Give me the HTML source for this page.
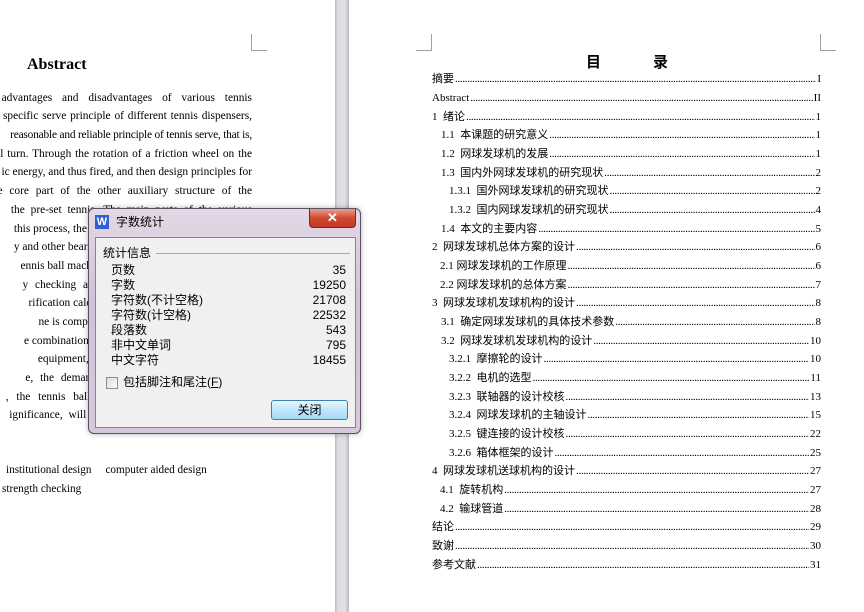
<!DOCTYPE html>
<html><head><meta charset="utf-8"><style>
*{margin:0;padding:0;box-sizing:border-box}
body{width:864px;height:612px;overflow:hidden;background:#fff;position:relative;font-family:"Liberation Serif","Noto Serif CJK SC","Noto Sans CJK SC",serif;color:#000}
.a{position:absolute}
.gut{left:335px;top:0;width:14px;height:612px;background:linear-gradient(90deg,#b8b8c0,#dedee2 20%,#e2e2e6 70%,#b8b8c0)}
.ln{position:absolute;left:0;width:252px;height:18px;overflow:hidden;font-size:11.4px;line-height:18px;white-space:nowrap;display:flex;justify-content:flex-end}
.ln span{flex:none}
.toc{position:absolute;left:0;font-size:11px;line-height:14px;white-space:nowrap;font-family:"Liberation Serif","Noto Sans CJK SC",serif}
.toc .r{position:absolute;height:14px;display:flex}
.toc .d{flex:1;overflow:hidden;margin:0 1px;letter-spacing:-0.3px}
.toc .d::before{content:"................................................................................................................................................................................................................................................................................................................"}
.dlg{left:88px;top:208px;width:273px;height:226px;border:1px solid #5a5060;border-radius:6px;background:linear-gradient(180deg,#e3d8e6,#d2c2d8 40%,#d8c8dc);box-shadow:0 0 6px rgba(0,0,0,.3)}
.pan{position:absolute;left:6px;top:28px;width:261px;height:191px;background:#f0f0f0;border:1px solid #8a8290}
.sf{font-family:"Liberation Sans","Noto Sans CJK SC",sans-serif;font-size:12px}
.row{position:absolute;left:15px;width:235px;height:15px;line-height:15px}
.row b{font-weight:normal;position:absolute;right:0}
</style></head><body>
<div class="a gut"></div>
<div class="a" style="left:251px;top:34px;width:1px;height:16px;background:#a0a0a0"></div>
<div class="a" style="left:251px;top:50px;width:16px;height:1px;background:#a0a0a0"></div>
<div class="a" style="left:431px;top:34px;width:1px;height:16px;background:#a0a0a0"></div>
<div class="a" style="left:416px;top:50px;width:16px;height:1px;background:#a0a0a0"></div>
<div class="a" style="left:820px;top:34px;width:1px;height:16px;background:#a0a0a0"></div>
<div class="a" style="left:820px;top:50px;width:16px;height:1px;background:#a0a0a0"></div>

<div class="a" style="left:27px;top:56px;font-size:16px;font-weight:bold">Abstract</div>
<div class="ln" style="top:89px"><span style="word-spacing:7px">he advantages and disadvantages of various tennis</span></div>
<div class="ln" style="top:107px"><span style="word-spacing:1px">specific serve principle of different tennis dispensers,</span></div>
<div class="ln" style="top:126px"><span style="letter-spacing:-0.2px">reasonable and reliable principle of tennis serve, that is,</span></div>
<div class="ln" style="top:145px"><span style="word-spacing:1px">l turn. Through the rotation of a friction wheel on the</span></div>
<div class="ln" style="top:163px"><span>ic energy, and thus fired, and then design principles for</span></div>
<div class="ln" style="top:182px"><span style="word-spacing:4px">the core part of the other auxiliary structure of the</span></div>
<div class="ln" style="top:201px"><span style="word-spacing:3px">the pre-set tennis. The main parts of the various</span></div>
<div class="ln" style="top:220px"><span>this process, the speed of the ball can be adjusted by</span></div>
<div class="ln" style="top:238px"><span>y and other bearing parts of the design and checking</span></div>
<div class="ln" style="top:257px"><span>ennis ball machine design of the frame structure of</span></div>
<div class="ln" style="top:276px"><span style="word-spacing:4px">y checking and calculation of the main parts</span></div>
<div class="ln" style="top:294px"><span>rification calculation of the key, the design of the</span></div>
<div class="ln" style="top:313px"><span>ne is completely feasible and reliable in design</span></div>
<div class="ln" style="top:332px"><span>e combination of electromechanical and computer</span></div>
<div class="ln" style="top:350px"><span>equipment, the current level of development of</span></div>
<div class="ln" style="top:369px"><span style="word-spacing:4px">e, the demand for the equipment is growing</span></div>
<div class="ln" style="top:388px"><span style="word-spacing:5px">, the tennis ball machine has broad application</span></div>
<div class="ln" style="top:406px"><span style="word-spacing:3px">ignificance, will greatly promote the development</span></div>
<div class="a" style="left:6px;top:464px;font-size:11.2px;white-space:nowrap">institutional design&nbsp;&nbsp;&nbsp;&nbsp; computer aided design</div>
<div class="a" style="left:2px;top:483px;font-size:11.2px;white-space:nowrap">strength checking</div>

<div class="a" style="left:586px;top:51px;font-size:15px;font-weight:bold;font-family:'Noto Sans CJK SC',sans-serif">目<span style="display:inline-block;width:52px"></span>录</div>

<div class="toc">
<div class="r" style="top:72px;left:432px;width:389px"><span>摘要</span><span class="d"></span><span>I</span></div>
<div class="r" style="top:91px;left:432px;width:389px"><span>Abstract</span><span class="d"></span><span>II</span></div>
<div class="r" style="top:110px;left:432px;width:389px"><span>1&nbsp; 绪论</span><span class="d"></span><span>1</span></div>
<div class="r" style="top:128px;left:441px;width:380px"><span>1.1&nbsp; 本课题的研究意义</span><span class="d"></span><span>1</span></div>
<div class="r" style="top:147px;left:441px;width:380px"><span>1.2&nbsp; 网球发球机的发展</span><span class="d"></span><span>1</span></div>
<div class="r" style="top:166px;left:441px;width:380px"><span>1.3&nbsp; 国内外网球发球机的研究现状</span><span class="d"></span><span>2</span></div>
<div class="r" style="top:184px;left:449px;width:372px"><span>1.3.1&nbsp; 国外网球发球机的研究现状</span><span class="d"></span><span>2</span></div>
<div class="r" style="top:203px;left:449px;width:372px"><span>1.3.2&nbsp; 国内网球发球机的研究现状</span><span class="d"></span><span>4</span></div>
<div class="r" style="top:222px;left:441px;width:380px"><span>1.4&nbsp; 本文的主要内容</span><span class="d"></span><span>5</span></div>
<div class="r" style="top:240px;left:432px;width:389px"><span>2&nbsp; 网球发球机总体方案的设计</span><span class="d"></span><span>6</span></div>
<div class="r" style="top:259px;left:440px;width:381px"><span>2.1 网球发球机的工作原理</span><span class="d"></span><span>6</span></div>
<div class="r" style="top:278px;left:440px;width:381px"><span>2.2 网球发球机的总体方案</span><span class="d"></span><span>7</span></div>
<div class="r" style="top:296px;left:432px;width:389px"><span>3&nbsp; 网球发球机发球机构的设计</span><span class="d"></span><span>8</span></div>
<div class="r" style="top:315px;left:441px;width:380px"><span>3.1&nbsp; 确定网球发球机的具体技术参数</span><span class="d"></span><span>8</span></div>
<div class="r" style="top:334px;left:441px;width:380px"><span>3.2&nbsp; 网球发球机发球机构的设计</span><span class="d"></span><span>10</span></div>
<div class="r" style="top:352px;left:449px;width:372px"><span>3.2.1&nbsp; 摩擦轮的设计</span><span class="d"></span><span>10</span></div>
<div class="r" style="top:371px;left:449px;width:372px"><span>3.2.2&nbsp; 电机的选型</span><span class="d"></span><span>11</span></div>
<div class="r" style="top:390px;left:449px;width:372px"><span>3.2.3&nbsp; 联轴器的设计校核</span><span class="d"></span><span>13</span></div>
<div class="r" style="top:408px;left:449px;width:372px"><span>3.2.4&nbsp; 网球发球机的主轴设计</span><span class="d"></span><span>15</span></div>
<div class="r" style="top:427px;left:449px;width:372px"><span>3.2.5&nbsp; 键连接的设计校核</span><span class="d"></span><span>22</span></div>
<div class="r" style="top:446px;left:449px;width:372px"><span>3.2.6&nbsp; 箱体框架的设计</span><span class="d"></span><span>25</span></div>
<div class="r" style="top:464px;left:432px;width:389px"><span>4&nbsp; 网球发球机送球机构的设计</span><span class="d"></span><span>27</span></div>
<div class="r" style="top:483px;left:440px;width:381px"><span>4.1&nbsp; 旋转机构</span><span class="d"></span><span>27</span></div>
<div class="r" style="top:502px;left:440px;width:381px"><span>4.2&nbsp; 输球管道</span><span class="d"></span><span>28</span></div>
<div class="r" style="top:520px;left:432px;width:389px"><span>结论</span><span class="d"></span><span>29</span></div>
<div class="r" style="top:539px;left:432px;width:389px"><span>致谢</span><span class="d"></span><span>30</span></div>
<div class="r" style="top:558px;left:432px;width:389px"><span>参考文献</span><span class="d"></span><span>31</span></div>
</div>

<div class="a dlg sf">
 <div class="a" style="left:220px;top:0;width:47px;height:19px;border:1px solid #6a2a2a;border-top:none;border-radius:0 0 4px 4px;background:linear-gradient(180deg,#e8a090,#d04a30 50%,#c03a22);color:#fff;text-align:center;font-size:13px;line-height:17px;font-weight:bold">✕</div>
 <div class="a" style="left:6px;top:6px;width:14px;height:14px;background:#2f5fd6;color:#fff;font-size:11px;font-weight:bold;line-height:14px;text-align:center;font-family:'Liberation Sans',sans-serif">W</div>
 <div class="a" style="left:27px;top:5px;font-size:12px;line-height:16px">字数统计</div>
 <div class="pan">
  <div class="a" style="left:7px;top:8px;line-height:15px">统计信息</div>
  <div class="a" style="left:60px;top:15px;width:194px;height:1px;background:#a8a8a8"></div>
  <div class="row" style="top:25px">页数<b>35</b></div>
  <div class="row" style="top:40px">字数<b>19250</b></div>
  <div class="row" style="top:55px">字符数(不计空格)<b>21708</b></div>
  <div class="row" style="top:70px">字符数(计空格)<b>22532</b></div>
  <div class="row" style="top:85px">段落数<b>543</b></div>
  <div class="row" style="top:100px">非中文单词<b>795</b></div>
  <div class="row" style="top:115px">中文字符<b>18455</b></div>
  <div class="a" style="left:10px;top:139px;width:12px;height:12px;border:1px solid #8e8f8f;background:linear-gradient(135deg,#ddd,#fafafa)"></div>
  <div class="a" style="left:27px;top:137px;line-height:15px">包括脚注和尾注(<u>F</u>)</div>
  <div class="a" style="left:175px;top:162px;width:77px;height:20px;border:1px solid #3c7fb1;border-radius:3px;background:linear-gradient(180deg,#eaf6fd,#bee6fd 50%,#a7d9f5);text-align:center;line-height:18px">关闭</div>
 </div>
</div>
</body></html>
